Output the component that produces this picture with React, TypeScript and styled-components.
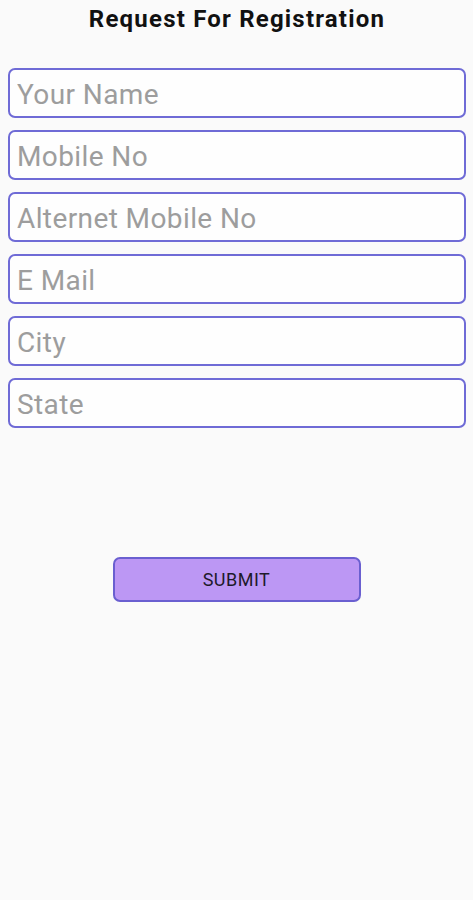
import React from 'react'
import styled, { createGlobalStyle } from 'styled-components'

const GlobalStyle = createGlobalStyle`
  html, body {
    margin: 0;
    padding: 0;
    background: #fafafa;
    font-family: Roboto, 'Liberation Sans', sans-serif;
  }
`

const Page = styled.div`
  display: flex;
  flex-direction: column;
  align-items: stretch;
  min-height: 900px;
  padding: 0 7px 0 8px;
  box-sizing: border-box;
`

const Title = styled.h1`
  margin: 4px 0 0;
  height: 30px;
  line-height: 30px;
  text-align: center;
  font-size: 24px;
  font-weight: 700;
  letter-spacing: 1.2px;
  color: #111;
`

const Form = styled.form`
  display: flex;
  flex-direction: column;
  gap: 12px;
  margin-top: 34px;
`

const Field = styled.input`
  height: 50px;
  box-sizing: border-box;
  border: 2px solid #6f6bd6;
  border-radius: 7px;
  background: #fefefe;
  padding: 3px 8px 0 7px;
  font-family: Roboto, 'Liberation Sans', sans-serif;
  font-size: 28px;
  letter-spacing: 0.4px;
  color: #333;
  outline: none;

  &::placeholder {
    color: #9d9d9d;
  }
`

const Submit = styled.button`
  align-self: center;
  margin-top: 117px;
  margin-right: 1px;
  width: 248px;
  height: 45px;
  border: 2px solid #6a5fd0;
  border-radius: 7px;
  background: #bc97f4;
  font-family: Roboto, 'Liberation Sans', sans-serif;
  font-size: 18px;
  color: #1e1a2a;
  letter-spacing: 0.5px;
`

const fields = ['Your Name', 'Mobile No', 'Alternet Mobile No', 'E Mail', 'City', 'State']

export default function App() {
  return (
    <>
      <GlobalStyle />
      <Page>
        <Title>Request For Registration</Title>
        <Form onSubmit={(e) => e.preventDefault()}>
          {fields.map((f) => (
            <Field key={f} placeholder={f} />
          ))}
          <Submit type="submit">SUBMIT</Submit>
        </Form>
      </Page>
    </>
  )
}
